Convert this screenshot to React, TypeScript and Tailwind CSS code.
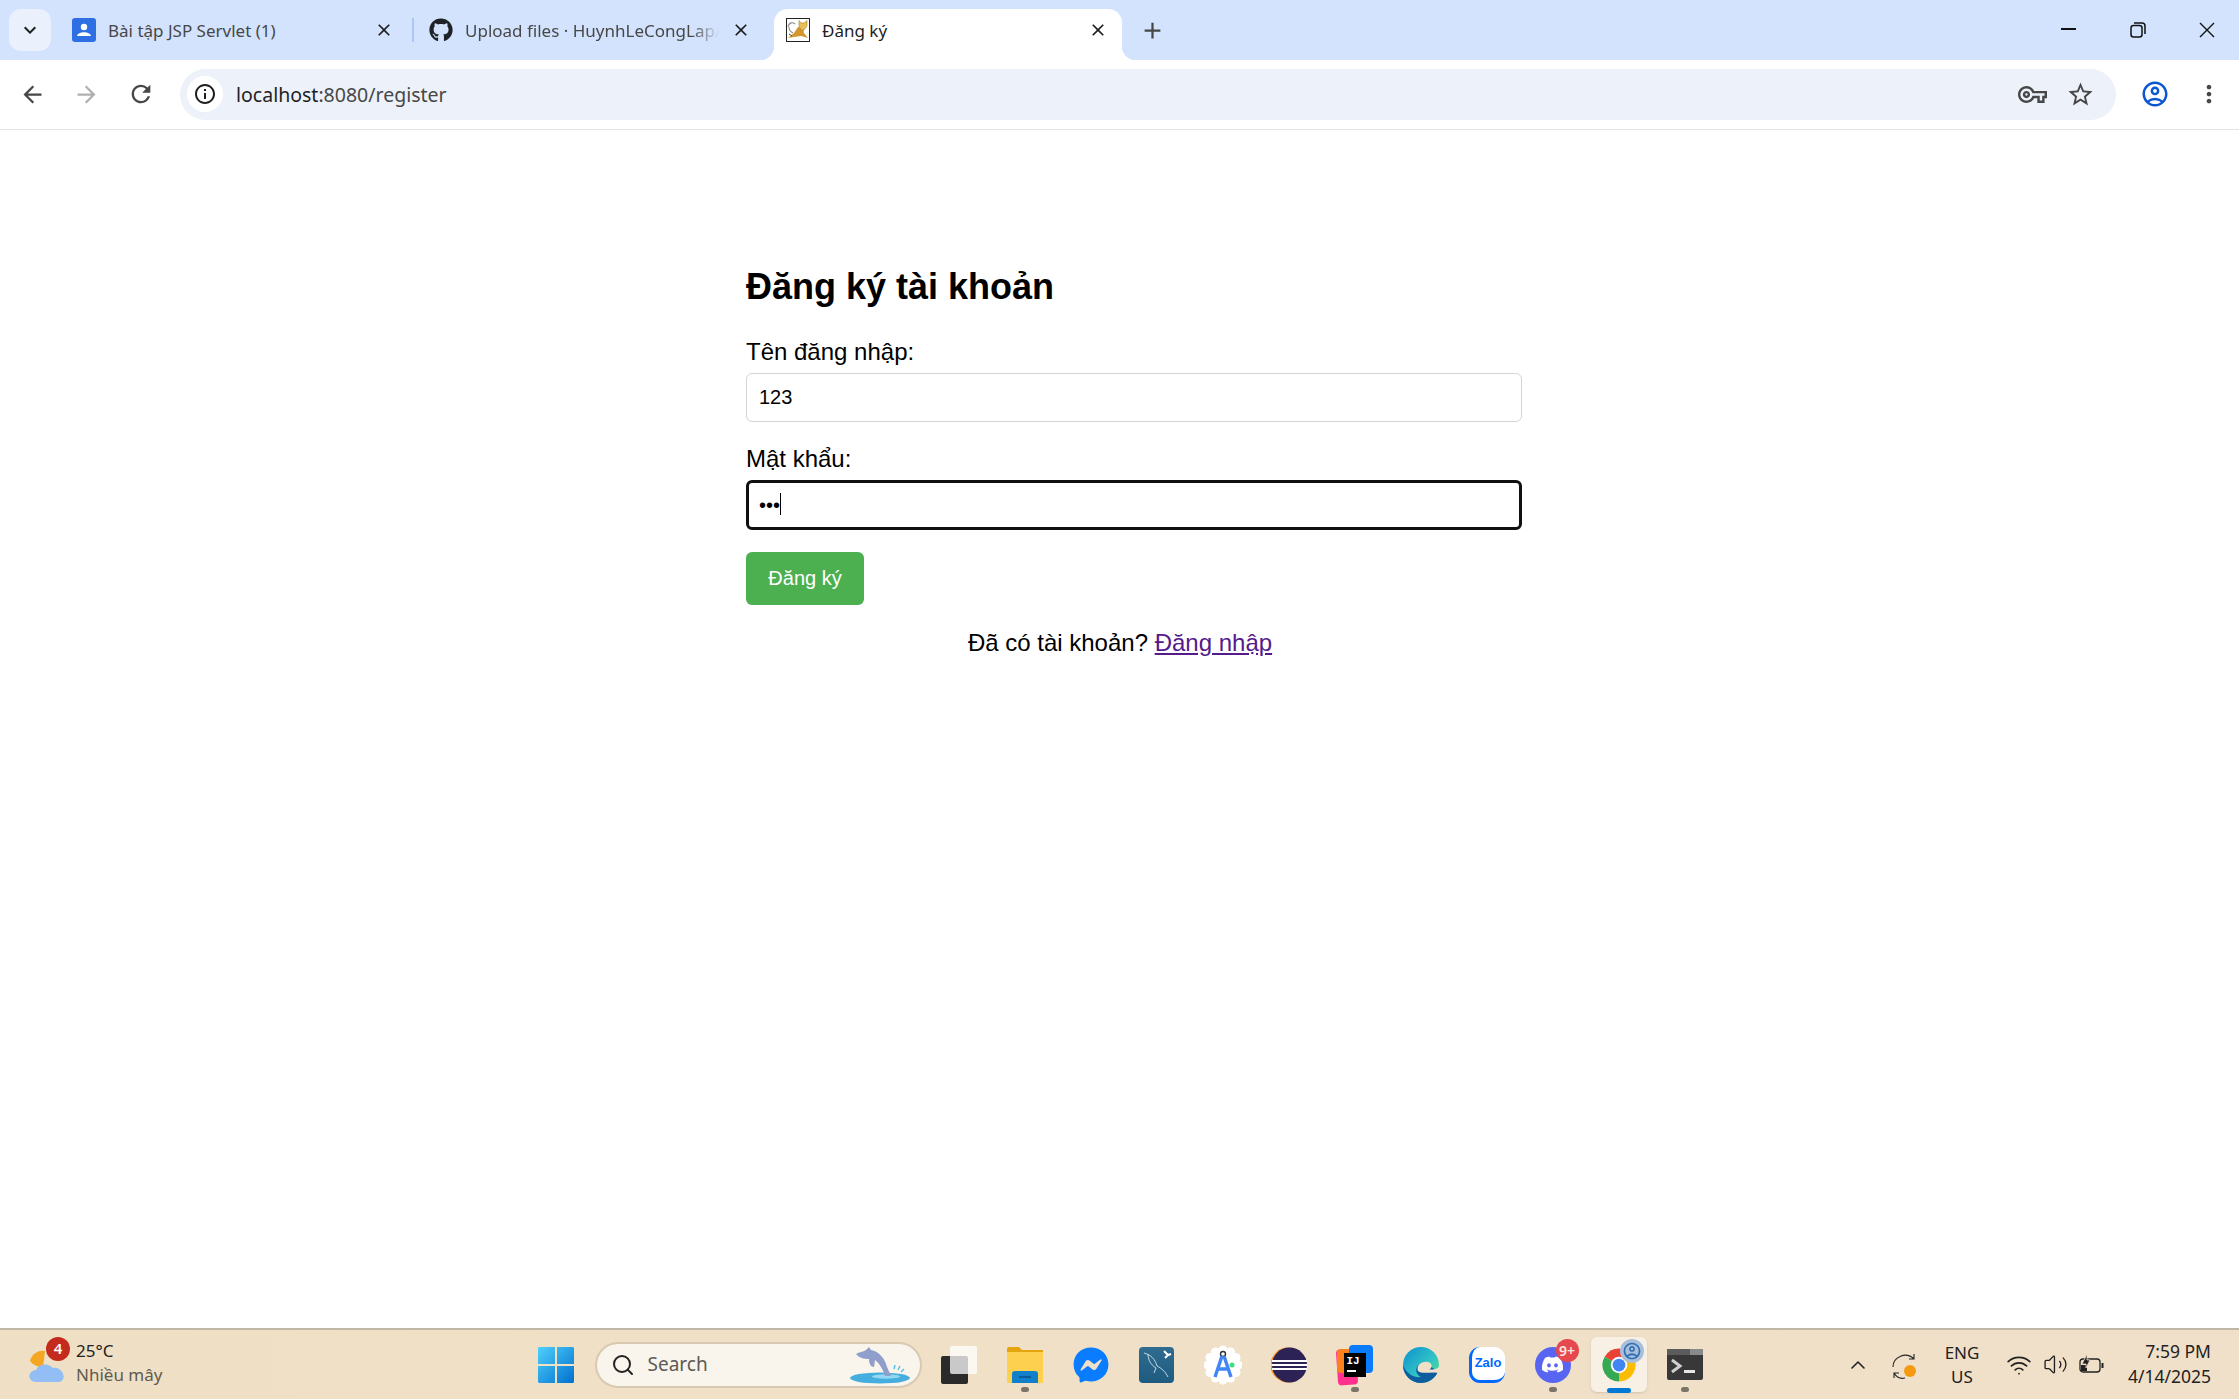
import type { ReactNode } from "react";
import { FaFacebookMessenger, FaDiscord, FaGithub } from "react-icons/fa";
import {
  MdAdd,
  MdArrowBack,
  MdArrowForward,
  MdClose,
  MdInfoOutline,
  MdKeyboardArrowDown,
  MdMoreVert,
  MdOutlineAccountCircle,
  MdOutlineStarBorder,
  MdOutlineVpnKey,
  MdRefresh,
} from "react-icons/md";
import { ChevronUp, Search, Volume2, Wifi } from "lucide-react";

const scallops = [0, 30, 60, 90, 120, 150, 180, 210, 240, 270, 300, 330];

function TomcatIcon() {
  return (
    <svg width="24" height="24" viewBox="0 0 24 24">
      <rect x="0.5" y="0.5" width="23" height="23" fill="#fff" stroke="#222" />
      <path d="M2 9 C3 4 7 4 9 6 M3 9 C3 12 5 14 7 15" fill="none" stroke="#8a8a8a" strokeWidth="1.1" />
      <path d="M2 20 L8 15 L12 9 L17 10 L18 15 L22 20 L15 18 L8 19 Z" fill="#d4962e" />
      <path d="M13 2.5 L15 5 L18 5 L21 2.5 L21 8 L18 12 L15 12 L13 8 Z" fill="#eabf58" stroke="#96701f" strokeWidth="0.5" />
      <path d="M3 16 L6 18" stroke="#333" strokeWidth="0.9" />
    </svg>
  );
}

function Tab({ icon, title, active, fade }: { icon: ReactNode; title: string; active?: boolean; fade?: boolean }) {
  return (
    <div
      className={`relative flex h-[51px] w-[348px] items-center self-end rounded-t-[14px] pb-[9px] pl-3 pr-[14px] ${active ? "bg-white" : ""}`}
    >
      {active && (
        <>
          <span className="absolute bottom-0 left-[-14px] h-[14px] w-[14px] bg-[radial-gradient(circle_at_0_0,#d3e3fd_14px,#fff_14.5px)]" />
          <span className="absolute bottom-0 right-[-14px] h-[14px] w-[14px] bg-[radial-gradient(circle_at_100%_0,#d3e3fd_14px,#fff_14.5px)]" />
        </>
      )}
      <span className="flex h-6 w-6 shrink-0 items-center justify-center">{icon}</span>
      <span
        className={`ml-3 flex-1 overflow-hidden whitespace-nowrap pt-[2px] text-[17px] ${active ? "text-[#1f1f1f]" : "text-[#474747]"} ${fade ? "[mask-image:linear-gradient(to_left,transparent,#000_28px)]" : ""}`}
      >
        {title}
      </span>
      <MdClose className="ml-3 shrink-0 text-[#1f1f1f]" size={20} />
    </div>
  );
}

function TabStrip() {
  return (
    <div className="flex h-[60px] bg-[#d3e3fd]">
      <div className="ml-[9px] mt-[9px] flex h-[42px] w-[42px] items-center justify-center rounded-xl bg-[#eaf1fd]">
        <MdKeyboardArrowDown size={24} className="text-[#1f1f1f]" />
      </div>
      <div className="ml-[9px] flex">
        <Tab
          title="Bài tập JSP Servlet (1)"
          icon={
            <svg width="24" height="24" viewBox="0 0 24 24">
              <rect width="24" height="24" rx="3" fill="#2f6fe4" />
              <circle cx="12" cy="9" r="3.2" fill="#fff" />
              <path d="M5 18 C6 13 18 13 19 18 Z" fill="#fff" />
            </svg>
          }
        />
        <div className="flex w-[9px] justify-center pt-[18px]">
          <span className="h-6 w-[2px] bg-[#a8c7fa]" />
        </div>
        <Tab title="Upload files · HuynhLeCongLap/" fade icon={<FaGithub size={24} className="text-[#1f2328]" />} />
        <span className="w-[9px]" />
        <Tab title="Đăng ký" active icon={<TomcatIcon />} />
      </div>
      <div className="ml-[9px] mt-[9px] flex h-[42px] w-[42px] items-center justify-center">
        <MdAdd size={27} className="text-[#444746]" />
      </div>
      <div className="ml-auto flex gap-[9.5px] pr-[2px]">
        <div className="flex w-[60px] items-center justify-center pb-[2px]">
          <span className="h-[2px] w-[15px] bg-[#111]" />
        </div>
        <div className="flex w-[60px] items-center justify-center">
          <svg width="16" height="16" viewBox="0 0 16 16" fill="none" stroke="#111" strokeWidth="1.5">
            <rect x="1" y="3.5" width="11" height="11.5" rx="2.5" />
            <path d="M4 1 H12 A3 3 0 0 1 15 4 V12" />
          </svg>
        </div>
        <div className="flex w-[60px] items-center justify-center">
          <svg width="16" height="16" viewBox="0 0 16 16" stroke="#111" strokeWidth="1.4">
            <path d="M1 1 L15 15 M15 1 L1 15" />
          </svg>
        </div>
      </div>
    </div>
  );
}

function Toolbar() {
  return (
    <div className="flex h-[70px] items-center border-b border-[#e3e3e3] bg-white pb-px">
      <div className="flex w-[180px] shrink-0 items-center pl-[19px]">
        <MdArrowBack size={27} className="text-[#474747]" />
        <MdArrowForward size={27} className="ml-[27px] text-[#b0b0b0]" />
        <MdRefresh size={28} className="ml-[27px] text-[#474747]" />
      </div>
      <div className="flex h-[51px] flex-1 items-center rounded-full bg-[#ecf1fa] pl-[7px] pr-[21px]">
        <span className="flex h-9 w-9 items-center justify-center rounded-full bg-white">
          <MdInfoOutline size={24} className="text-[#1f1f1f]" />
        </span>
        <span className="ml-[13px] pt-px text-[19.5px] text-[#474747]">
          <span className="text-[#1f1f1f]">localhost</span>:8080/register
        </span>
        <MdOutlineVpnKey size={29} className="ml-auto text-[#474747]" />
        <MdOutlineStarBorder size={29} className="ml-[19px] text-[#474747]" />
      </div>
      <MdOutlineAccountCircle size={30} className="ml-6 text-[#0b57d0]" />
      <MdMoreVert size={28} className="ml-[25px] mr-4 text-[#474747]" />
    </div>
  );
}

function RegisterForm() {
  const labelClass = "block text-2xl leading-7 text-black";
  return (
    <main className="flex-1 bg-white font-['Liberation_Sans',sans-serif] text-black">
      <div className="ml-[746px] w-[748px] pt-[136px]">
        <h2 className="text-[36px] font-bold leading-[41px]">Đăng ký tài khoản</h2>
        <label className={`${labelClass} mt-[31px]`}>Tên đăng nhập:</label>
        <input
          readOnly
          value="123"
          className="mt-[7px] block h-[49px] w-[776px] rounded-md border border-[#d4d4d4] px-3 text-xl outline-none"
        />
        <label className={`${labelClass} mt-[23px]`}>Mật khẩu:</label>
        <div className="relative mt-[7px]">
          <input
            readOnly
            type="password"
            value="123"
            className="block h-[50px] w-[776px] rounded-md border-[3px] border-[#101010] px-[10px] text-xl caret-transparent outline-none"
          />
          <span className="absolute left-[34px] top-[13px] h-[22px] w-px bg-black" />
        </div>
        <button className="mt-[22px] block h-[53px] w-[118px] rounded-md bg-[#4caf50] pb-px text-xl text-white">Đăng ký</button>
        <p className="mt-6 text-center text-2xl leading-7">
          Đã có tài khoản? <a className="text-[#551a8b] underline">Đăng nhập</a>
        </p>
      </div>
    </main>
  );
}

function StartIcon() {
  return (
    <svg width="36" height="36" viewBox="0 0 36 36">
      <defs>
        <linearGradient id="win" x1="0" y1="0" x2="1" y2="1">
          <stop offset="0" stopColor="#4fd0fb" />
          <stop offset="1" stopColor="#0070cf" />
        </linearGradient>
      </defs>
      <path d="M1 0 H17 V17 H0 V1 Z M19 0 H35 L36 1 V17 H19 Z M0 19 H17 V36 H1 L0 35 Z M19 19 H36 V35 L35 36 H19 Z" fill="url(#win)" />
    </svg>
  );
}

function Dolphin() {
  return (
    <svg width="62" height="40" viewBox="0 0 62 40">
      <ellipse cx="31" cy="33" rx="30" ry="5.5" fill="#45aede" />
      <ellipse cx="37" cy="31.5" rx="14" ry="2.2" fill="#93d8f3" />
      <path d="M7 9 C10 7 14 7 17 5 L20 2 L22 5 C30 6 36 14 38 22 L42 31 L36 31 C34 24 30 18 26 15 L25 22 C22 22 20 19 20 14 C15 14 10 13 7 9 Z" fill="#8f9ecb" />
      <path d="M45 24 L46 20 M49 25 L51 21 M52 27 L55 24" stroke="#5bbfe8" strokeWidth="1.5" />
    </svg>
  );
}

function TaskIcon({ children, dot, active }: { children: ReactNode; dot?: boolean; active?: boolean }) {
  return (
    <div className="relative flex h-full w-[66px] items-center justify-center">
      {active && <span className="absolute inset-x-[5px] bottom-[7px] top-[7px] rounded-md bg-[#f8f0e5] shadow-sm" />}
      <span className="relative flex items-center justify-center">{children}</span>
      {dot && <span className="absolute bottom-[7px] h-[5px] w-2 rounded-full bg-[#7a7469]" />}
      {active && <span className="absolute bottom-[6px] h-[5px] w-6 rounded-full bg-[#0078d4]" />}
    </div>
  );
}

function ChromeIcon() {
  return (
    <svg width="36" height="40" viewBox="0 0 48 48">
      <path d="M24 24 L4.9 13 A22 22 0 0 1 43.1 13 Z" fill="#ea4335" />
      <path d="M24 24 L24 46 A22 22 0 0 1 4.9 13 Z" fill="#34a853" />
      <path d="M24 24 L43.1 13 A22 22 0 0 1 24 46 Z" fill="#fbbc04" />
      <circle cx="24" cy="24" r="11" fill="#fff" />
      <circle cx="24" cy="24" r="8.5" fill="#4285f4" />
    </svg>
  );
}

function TaskbarIcons() {
  return (
    <div className="flex h-full items-center">
      <TaskIcon>
        <StartIcon />
      </TaskIcon>
      <div className="ml-[6px] mr-1 flex h-[46px] w-[327px] items-center rounded-full border-2 border-[#d8c9b2] bg-[#f9f4ec] pl-[14px] pr-[9px]">
        <Search size={24} strokeWidth={2} className="text-[#222]" />
        <span className="ml-[13px] text-[19px] text-[#5c5a57]">Search</span>
        <span className="ml-auto">
          <Dolphin />
        </span>
      </div>
      <TaskIcon>
        <svg width="36" height="40" viewBox="0 0 36 40">
          <rect x="0" y="11" width="27" height="28" rx="2" fill="#2a2a2a" />
          <rect x="9" y="1" width="27" height="28" rx="2" fill="#fff" fillOpacity="0.75" />
        </svg>
      </TaskIcon>
      <TaskIcon dot>
        <svg width="36" height="36" viewBox="0 0 36 36">
          <path d="M0 2 Q0 0 2 0 H12 L15 3 H36 V36 H0 Z" fill="#e4a50e" />
          <rect y="5" width="36" height="31" fill="#fdd04f" />
          <path d="M5 36 V27 Q5 24 8 24 H28 Q31 24 31 27 V36 Z" fill="#0f80c9" />
          <rect x="12" y="29" width="12" height="2" fill="#0a5a96" />
        </svg>
      </TaskIcon>
      <TaskIcon>
        <FaFacebookMessenger size={36} className="text-[#0a7cff]" />
      </TaskIcon>
      <TaskIcon>
        <svg width="36" height="36" viewBox="0 0 36 36">
          <defs>
            <linearGradient id="sql" x1="0" y1="0" x2="0" y2="1">
              <stop offset="0" stopColor="#2f6c8f" />
              <stop offset="1" stopColor="#1f5a80" />
            </linearGradient>
          </defs>
          <rect width="35" height="36" rx="4" fill="url(#sql)" />
          <path d="M5 6 C12 8 16 12 18 19 C22 21 26 24 29 30 M9 7 C9 13 12 18 17 21 L15 26" fill="none" stroke="#d4e4ec" strokeWidth="0.9" />
          <path d="M25 4 L29 8 L32 7 M29 8 L26 11" fill="none" stroke="#fff" strokeWidth="2" />
        </svg>
      </TaskIcon>
      <TaskIcon>
        <svg width="38" height="40" viewBox="0 0 38 40">
          <circle cx="19" cy="20" r="16" fill="#fff" />
          {scallops.map((a) => (
            <circle
              key={a}
              cx={19 + 15 * Math.cos((a * Math.PI) / 180)}
              cy={20 + 15 * Math.sin((a * Math.PI) / 180)}
              r="4.5"
              fill="#fff"
            />
          ))}
          <circle cx="19" cy="9" r="2.5" fill="none" stroke="#333" strokeWidth="1.4" />
          <path d="M18 11 L11 32 M20 11 L27 32 M13 24 H25" fill="none" stroke="#4285f4" strokeWidth="3.4" />
          <circle cx="28" cy="20" r="2.5" fill="#3ddc84" />
        </svg>
      </TaskIcon>
      <TaskIcon>
        <svg width="36" height="36" viewBox="0 0 36 36">
          <circle cx="17" cy="18" r="17.5" fill="#f7941e" />
          <circle cx="18.5" cy="18" r="17.5" fill="#2c2255" />
          <path d="M1 13 H36 V15 H1 Z M0.5 17 H36.5 V19 H0.5 Z M1 21 H36 V23 H1 Z" fill="#fff" />
        </svg>
      </TaskIcon>
      <TaskIcon dot>
        <div className="relative h-10 w-9">
          <span className="absolute bottom-0 left-0 h-9 w-5 rotate-[-4deg] rounded-sm bg-[#ff318c]" />
          <span className="absolute left-0 top-1 h-6 w-8 rounded-sm bg-[#fc801d]" />
          <span className="absolute right-0 top-0 h-7 w-6 rounded-sm bg-[#087cfa]" />
          <span className="absolute bottom-[8px] left-[7px] flex h-[24px] w-[22px] flex-col bg-black px-[3px] pt-[2px] font-['Liberation_Mono',monospace] text-[11px] font-bold leading-[12px] text-white">
            IJ
            <span className="mt-[3px] h-[2px] w-[9px] bg-white" />
          </span>
        </div>
      </TaskIcon>
      <TaskIcon>
        <svg width="36" height="40" viewBox="0 0 36 40">
          <defs>
            <linearGradient id="edge" x1="0" y1="0" x2="1" y2="1">
              <stop offset="0" stopColor="#0c8fd0" />
              <stop offset="0.6" stopColor="#33c6c4" />
              <stop offset="1" stopColor="#62e06f" />
            </linearGradient>
          </defs>
          <circle cx="18" cy="20" r="18" fill="url(#edge)" />
          <path d="M36 24 C33 34 25 38 18 38 C8 38 0 30 0 20 C3 28 10 33 18 32 C14 30 12 26 14 22 C16 18 24 16 28 20 C29 24 32 25 36 24 Z" fill="#0f5c9e" />
          <path d="M15 26 C13 21 18 16 25 17 C29 18 30 22 27 24 C25 25 33 25 36 22 L36 28 C30 26 20 30 15 26 Z" fill="#f0e0c8" />
        </svg>
      </TaskIcon>
      <TaskIcon>
        <div className="flex h-9 w-9 items-center justify-center rounded-[11px] border-b-[3px] border-l-[3px] border-[#0068ff] bg-white font-['Liberation_Sans',sans-serif] text-[13px] font-bold text-[#0068ff]">
          Zalo
        </div>
      </TaskIcon>
      <TaskIcon dot>
        <div className="relative flex h-9 w-9 items-center justify-center rounded-full bg-[#5865f2]">
          <FaDiscord size={23} className="text-white" />
          <span className="absolute -right-2 -top-2 flex h-[23px] w-[23px] items-center justify-center rounded-full bg-[#e5484d] text-[14px] font-semibold text-[#fbe9e0]">
            9+
          </span>
        </div>
      </TaskIcon>
      <TaskIcon active>
        <div className="relative">
          <ChromeIcon />
          <span className="absolute -right-[7px] -top-[6px] flex h-6 w-6 items-center justify-center rounded-full bg-[#a9bfd9]">
            <MdOutlineAccountCircle size={20} className="text-[#2f6fb5]" />
          </span>
        </div>
      </TaskIcon>
      <TaskIcon dot>
        <svg width="36" height="32" viewBox="0 0 36 32">
          <rect width="36" height="31" rx="2" fill="#383838" />
          <rect width="36" height="6" fill="#5c5c5c" />
          <rect x="23" width="13" height="6" fill="#8a8a8a" />
          <path d="M5 11 L13 17 L5 23" fill="none" stroke="#d0d0d0" strokeWidth="3" />
          <rect x="17" y="21" width="11" height="3" fill="#e5e5e5" />
        </svg>
      </TaskIcon>
    </div>
  );
}

function Tray() {
  return (
    <div className="flex flex-1 items-center justify-end pr-7 text-[#222]">
      <ChevronUp size={24} strokeWidth={1.6} />
      <span className="relative ml-[22px] h-6 w-6">
        <svg width="26" height="26" viewBox="0 0 26 26" fill="none" stroke="#222" strokeWidth="1.1">
          <path d="M1 14 C1 4 14 -2 22 6 M22 1 V6 H17" />
          <path d="M2 20 C5 25 9 26 13 25 M2 25 V20 H7" />
        </svg>
        <span className="absolute left-[12px] top-3 h-3 w-3 rounded-full bg-[#f59a10]" />
      </span>
      <span className="ml-[22px] w-[48px] text-center text-[17px] leading-6">
        ENG
        <br />
        US
      </span>
      <Wifi size={26} strokeWidth={1.6} className="ml-[20px]" />
      <Volume2 size={25} strokeWidth={1.3} className="ml-[11px]" />
      <svg width="26" height="24" viewBox="0 0 26 24" fill="none" stroke="#222" strokeWidth="1.3" className="ml-[11px]">
        <rect x="1" y="6" width="20" height="13" rx="3" />
        <path d="M23.5 10 V15" strokeWidth="2" />
        <path d="M2 12 H8 V18 H2 Z" fill="#222" stroke="none" />
        <path d="M8 1 L3 11 H7 V15 L11 7 H8 Z" fill="#222" stroke="#f0e0c8" strokeWidth="0.8" />
      </svg>
      <span className="ml-[18px] w-[88px] pb-[2px] text-right text-[17.5px] leading-[25px]">
        7:59 PM
        <br />
        4/14/2025
      </span>
    </div>
  );
}

function Taskbar() {
  return (
    <div className="flex h-[71px] items-center border-t-2 border-[#bfb6a6] bg-gradient-to-r from-[#efe0c5] to-[#f1e0c9]">
      <div className="flex flex-1 items-center pl-[29px]">
        <div className="relative">
          <svg width="37" height="36" viewBox="0 0 37 36">
            <path d="M16 4 A13 13 0 0 0 1 14 A16 16 0 0 0 14 20 Z" fill="#f5a623" />
            <path d="M8 35 C-2 35 -2 24 7 23 C10 16 20 16 24 21 C34 19 40 35 28 35 Z" fill="#93bdf5" />
          </svg>
          <span className="absolute -top-[10px] left-[17px] flex h-6 w-6 items-center justify-center rounded-full bg-[#c42b1c] text-[15px] font-semibold text-white">
            4
          </span>
        </div>
        <div className="ml-[10px] pb-[3px] text-[17px] leading-6">
          <div className="text-[#222]">25°C</div>
          <div className="text-[#5f5a50]">Nhiều mây</div>
        </div>
      </div>
      <TaskbarIcons />
      <Tray />
    </div>
  );
}

export default function App() {
  return (
    <div className="flex h-screen w-full flex-col overflow-hidden font-['Noto_Sans',sans-serif]">
      <TabStrip />
      <Toolbar />
      <RegisterForm />
      <Taskbar />
    </div>
  );
}
